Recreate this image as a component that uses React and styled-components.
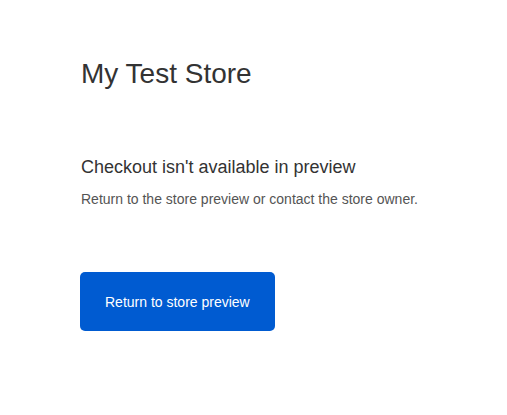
import React from "react";
import styled, { createGlobalStyle } from "styled-components";

const Global = createGlobalStyle`
  html, body { margin: 0; padding: 0; background: #ffffff; }
  body { font-family: "Liberation Sans", Arial, Helvetica, sans-serif; -webkit-font-smoothing: antialiased; }
`;

const Page = styled.main`
  padding: 57px 80px 0 81px;
  display: flex;
  flex-direction: column;
  align-items: flex-start;
`;

const StoreName = styled.h1`
  margin: 0;
  font-size: 28px;
  line-height: 34px;
  font-weight: 400;
  color: #333333;
`;

const Notice = styled.section`
  margin-top: 65px;
  display: flex;
  flex-direction: column;
  gap: 10px;
`;

const Heading = styled.h2`
  margin: 0;
  font-size: 18px;
  line-height: 23px;
  font-weight: 400;
  color: #333333;
`;

const Message = styled.p`
  margin: 0;
  font-size: 14px;
  line-height: 21px;
  color: #545454;
`;

const Button = styled.a`
  margin-top: 62px;
  margin-left: -1px;
  box-sizing: border-box;
  height: 59px;
  padding: 0 25px;
  display: inline-flex;
  align-items: center;
  background: #005bd1;
  color: #ffffff;
  border-radius: 5px;
  font-size: 14px;
  text-decoration: none;
  cursor: pointer;
`;

export default function App() {
  return (
    <>
      <Global />
      <Page>
        <StoreName>My Test Store</StoreName>
        <Notice>
          <Heading>Checkout isn't available in preview</Heading>
          <Message>Return to the store preview or contact the store owner.</Message>
        </Notice>
        <Button>Return to store preview</Button>
      </Page>
    </>
  );
}
